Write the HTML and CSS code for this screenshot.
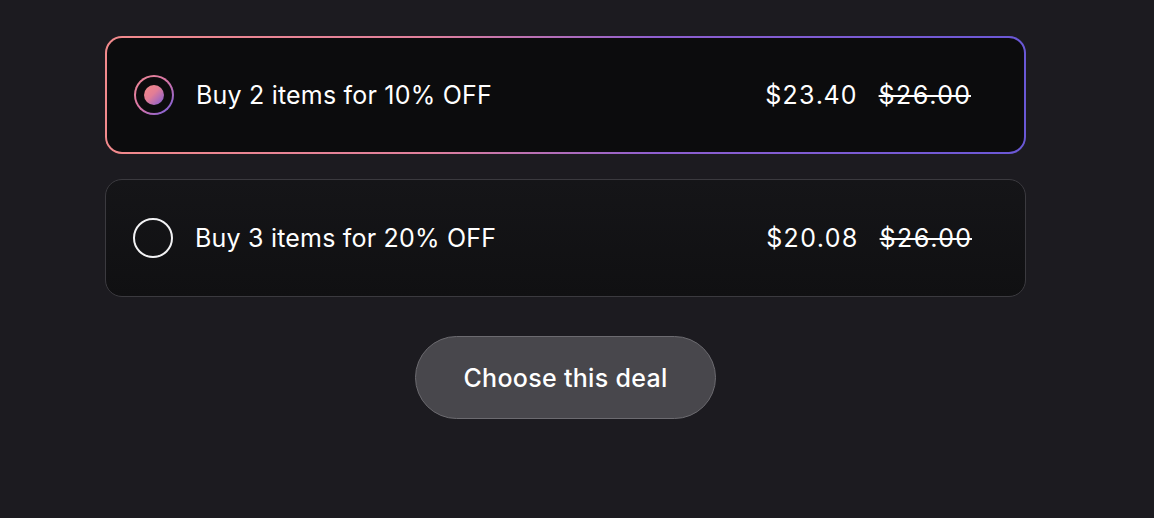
FILE: index.html
```html
<!DOCTYPE html>
<html>
<head>
<meta charset="utf-8">
<link rel="stylesheet" href="styles.css">
</head>
<body>
<div class="deals">
  <div class="deal deal--active">
    <span class="radio radio--on"><span class="dot"></span></span>
    <span class="label">Buy 2 items for 10% OFF</span>
    <span class="prices"><span class="price">$23.40</span><s class="old">$26.00</s></span>
  </div>
  <div class="deal">
    <span class="radio"></span>
    <span class="label">Buy 3 items for 20% OFF</span>
    <span class="prices"><span class="price">$20.08</span><s class="old">$26.00</s></span>
  </div>
  <div class="actions">
    <button class="cta">Choose this deal</button>
  </div>
</div>
</body>
</html>
```
FILE: styles.css
```css
html, body {
  margin: 0;
  padding: 0;
  background: #1c1b20;
  height: 100%;
}
body {
  font-family: Inter, "Noto Sans", sans-serif;
  color: #fff;
}
.deals {
  width: 921px;
  margin-left: 105px;
  padding-top: 36px;
  display: flex;
  flex-direction: column;
  gap: 25px;
}
.deal {
  box-sizing: border-box;
  height: 118px;
  border-radius: 17px;
  border: 1.5px solid #3b3a3f;
  background: linear-gradient(180deg, #151518 0%, #101012 100%);
  display: flex;
  align-items: center;
  padding: 0 53px 0 27px;
}
.deal--active {
  border: 2px solid transparent;
  background:
    linear-gradient(#0c0c0d, #0c0c0d) padding-box,
    linear-gradient(90deg, #f28a8c 0%, #e0809c 35%, #8e5fd0 60%, #6a58d6 100%) border-box;
}
.radio {
  box-sizing: border-box;
  width: 40px;
  height: 40px;
  border-radius: 50%;
  border: 2px solid #f2f2f4;
  display: flex;
  align-items: center;
  justify-content: center;
  flex: none;
}
.radio--on {
  border: 2px solid transparent;
  background:
    linear-gradient(#0c0c0d, #0c0c0d) padding-box,
    linear-gradient(135deg, #f08a92 0%, #d875a8 50%, #6d5ce0 100%) border-box;
}
.dot {
  width: 20px;
  height: 20px;
  border-radius: 50%;
  background: linear-gradient(135deg, #f48a86 0%, #e27d96 45%, #7c5ad8 100%);
}
.label {
  margin-left: 22px;
  font-size: 25px;
  flex: 1;
  letter-spacing: 0.2px;
}
.prices {
  display: flex;
  gap: 21px;
  font-size: 25px;
  font-variant-numeric: tabular-nums;
  letter-spacing: 0.8px;
}
.old {
  text-decoration: line-through;
  text-decoration-thickness: 2px;
}
.actions {
  display: flex;
  justify-content: center;
  margin-top: 14px;
}
.cta {
  box-sizing: border-box;
  width: 301px;
  height: 83px;
  border-radius: 42px;
  border: 1.5px solid #6c6b70;
  background: #48474c;
  color: #fff;
  font-family: Inter, "Noto Sans", sans-serif;
  font-size: 25px;
  font-weight: 500;
  letter-spacing: 0.3px;
}
```
